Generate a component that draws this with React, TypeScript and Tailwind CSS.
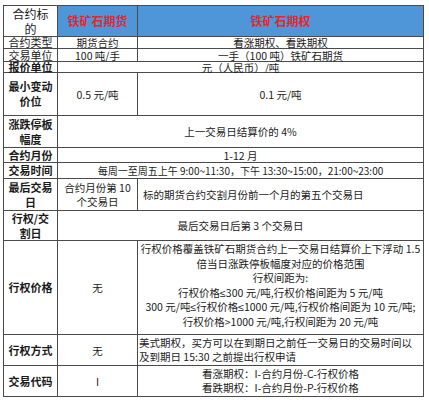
import React from 'react';

const font = { fontFamily: '"Noto Sans CJK SC", "Noto Sans", sans-serif' };

function Label({
  children,
  bold = true,
  two = false,
}: {
  children: React.ReactNode;
  bold?: boolean;
  two?: boolean;
}) {
  return (
    <div
      className={`bg-white flex items-center justify-center text-center text-[11px] text-[#1a1a1a] ${
        two ? 'leading-[15px]' : 'leading-[11px]'
      } ${bold ? 'font-bold' : ''}`}
    >
      <div>{children}</div>
    </div>
  );
}

function Cell({
  children,
  className = '',
  two = false,
}: {
  children: React.ReactNode;
  className?: string;
  two?: boolean;
}) {
  return (
    <div
      className={`bg-white flex items-center text-[10.5px] text-[#1a1a1a] whitespace-nowrap ${
        two ? 'leading-[14px]' : 'leading-[11px]'
      } ${className}`}
    >
      <div className="w-full">{children}</div>
    </div>
  );
}

// narrow symbol, the CJK font draws it too wide
const Le = () => <span className="font-['Liberation_Sans']">≤</span>;

export default function App() {
  return (
    <div className="w-[429px] h-[400px] bg-white" style={font}>
      <div className="pt-[5px] pl-[3px]">
        <div className="grid w-[421px] grid-cols-[53px_79px_285px] grid-rows-[30px_11px_12px_10px_42px_31px_14px_15px_31px_29px_93px_30px_30px] gap-px p-px bg-[#4a4a4a]">
          {/* header */}
          <div className="bg-white flex items-center justify-center text-center text-[12px] leading-[15px] text-[#1a1a1a]">
            <div>
              合约标
              <br />的
            </div>
          </div>
          <div className="bg-[#4f96d8] flex items-center justify-center text-[12px] leading-[14px] font-bold text-[#e3262f]">
            铁矿石期货
          </div>
          <div className="bg-[#4f96d8] flex items-center justify-center text-[12px] leading-[14px] font-bold text-[#e3262f]">
            铁矿石期权
          </div>

          <Label bold={false}>合约类型</Label>
          <Cell className="text-center">期货合约</Cell>
          <Cell className="text-center">看涨期权、看跌期权</Cell>

          <Label bold={false}>交易单位</Label>
          <Cell className="text-center">100 吨/手</Cell>
          <Cell className="text-center">一手（100 吨）铁矿石期货</Cell>

          <Label>报价单位</Label>
          <Cell className="col-span-2 text-center">元（人民币）/吨</Cell>

          <Label two>
            最小变动
            <br />
            价位
          </Label>
          <Cell className="text-center">0.5 元/吨</Cell>
          <Cell className="text-center">0.1 元/吨</Cell>

          <Label two>
            涨跌停板
            <br />
            幅度
          </Label>
          <Cell className="col-span-2 text-center">上一交易日结算价的 4%</Cell>

          <Label>合约月份</Label>
          <Cell className="col-span-2 text-center">1-12 月</Cell>

          <Label>交易时间</Label>
          <Cell className="col-span-2 text-center text-[10px]">
            每周一至周五上午 9:00~11:30，下午 13:30~15:00，21:00~23:00
          </Cell>

          <Label two>
            最后交易
            <br />日
          </Label>
          <Cell two className="text-center">
            合约月份第 10
            <br />
            个交易日
          </Cell>
          <Cell className="pl-[5px]">标的期货合约交割月份前一个月的第五个交易日</Cell>

          <Label two>
            行权/交
            <br />
            割日
          </Label>
          <Cell className="col-span-2 text-center">最后交易日后第 3 个交易日</Cell>

          <Label>行权价格</Label>
          <Cell className="text-center">无</Cell>
          <div className="bg-white text-center text-[10.5px] leading-[14.5px] text-[#1a1a1a] whitespace-nowrap pt-[1px]">
            行权价格覆盖铁矿石期货合约上一交易日结算价上下浮动 1.5
            <br />
            倍当日涨跌停板幅度对应的价格范围
            <br />
            行权间距为:
            <br />
            行权价格<Le />300 元/吨,行权价格间距为 5 元/吨
            <br />
            300 元/吨<Le />行权价格<Le />1000 元/吨,行权价格间距为 10 元/吨;
            <br />
            行权价格&gt;1000 元/吨,行权间距为 20 元/吨
          </div>

          <Label>行权方式</Label>
          <Cell className="text-center">无</Cell>
          <Cell two className="pl-[1px]">
            美式期权，买方可以在到期日之前任一交易日的交易时间以
            <br />
            及到期日 15:30 之前提出行权申请
          </Cell>

          <Label>交易代码</Label>
          <Cell className="text-center">I</Cell>
          <Cell two className="text-center">
            看涨期权：I-合约月份-C-行权价格
            <br />
            看跌期权：I-合约月份-P-行权价格
          </Cell>
        </div>
      </div>
    </div>
  );
}
